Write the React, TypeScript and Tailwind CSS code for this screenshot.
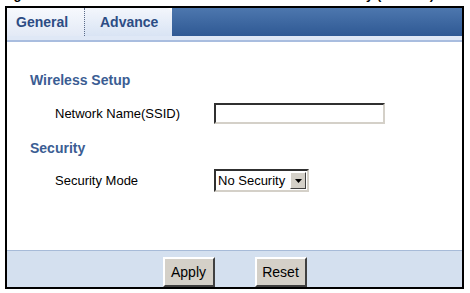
import { FC } from 'react';

const font = { fontFamily: '"Liberation Sans", Arial, sans-serif' };

const App: FC = () => {
    return (
        <div className="w-[470px] h-[293px] bg-white overflow-hidden text-black" style={font}>
            {/* caption above the figure, mostly cut off */}
            <div className="h-[5px] overflow-hidden">
                <div className="-mt-[13px] flex text-[13px] font-bold leading-[16px]">
                    <span className="ml-[2px]">Figure 71</span>
                    <span className="ml-auto mr-[36px]">Wireless LAN: Security (General)</span>
                </div>
            </div>

            <div className="mt-[1px] ml-[5px] w-[459px] border-2 border-black flex flex-col">
                {/* tab bar */}
                <div className="flex h-[28px]">
                    <div className="w-[77px] bg-gradient-to-b from-[#f7f9fd] to-[#e3eaf6] flex items-center pl-[9px] text-[14px] font-bold text-[#2c4c84]">
                        General
                    </div>
                    <div className="w-[88px] rounded-tr-[6px] border-l border-dotted border-[#5a6a88] bg-gradient-to-b from-[#f3f6fc] to-[#d9e4f4] flex items-center pl-[15px] text-[14px] font-bold text-[#2c4c84]">
                        Advance
                    </div>
                    <div className="flex-1 bg-gradient-to-b from-[#4d77ae] to-[#2f5994]" />
                </div>
                <div className="h-[4px] bg-[#dfe8f6]" />
                <div className="h-[2px] bg-[#a9bddf]" />

                {/* content */}
                <div className="h-[208px] bg-white flex flex-col pl-[23px]">
                    <div className="mt-[30px] h-[16px] leading-[16px] text-[14px] font-bold text-[#3b5d93]">
                        Wireless Setup
                    </div>
                    <div className="mt-[15px] flex items-center h-[21px]">
                        <span className="ml-[25px] w-[159px] text-[13px]">Network Name(SSID)</span>
                        <input
                            type="text"
                            className="w-[171px] h-[21px] bg-white outline-none border-2 border-t-[#303030] border-l-[#303030] border-b-[#d4d0c8] border-r-[#d4d0c8]"
                        />
                    </div>
                    <div className="mt-[16px] h-[16px] leading-[16px] text-[14px] font-bold text-[#3b5d93]">
                        Security
                    </div>
                    <div className="mt-[13px] flex items-center h-[23px]">
                        <span className="ml-[25px] w-[159px] text-[13px]">Security Mode</span>
                        <div className="h-[23px] flex items-center border-2 border-t-[#303030] border-l-[#303030] border-b-[#d4d0c8] border-r-[#d4d0c8] bg-white">
                            <span className="pl-[2px] pr-[5px] text-[13px]">No Security</span>
                            <div className="w-[16px] h-[17px] mr-[1px] bg-[#d4d0c8] border border-t-white border-l-white border-b-[#404040] border-r-[#404040] flex items-center justify-center">
                                <svg width="7" height="4" viewBox="0 0 7 4">
                                    <path d="M0 0 H7 L3.5 4 Z" fill="#000" />
                                </svg>
                            </div>
                        </div>
                    </div>
                </div>

                {/* footer */}
                <div className="h-[1px] bg-[#a7bbd8]" />
                <div className="h-[36px] bg-[#d4e0ef] overflow-hidden flex items-start justify-center gap-[40px] pt-[6px]">
                    <button className="w-[52px] h-[30px] bg-[#d4d0c8] border-2 border-t-white border-l-white border-b-[#404040] border-r-[#404040] text-[14px]">
                        Apply
                    </button>
                    <button className="w-[52px] h-[30px] bg-[#d4d0c8] border-2 border-t-white border-l-white border-b-[#404040] border-r-[#404040] text-[14px]">
                        Reset
                    </button>
                </div>
            </div>
        </div>
    );
};

export default App;
